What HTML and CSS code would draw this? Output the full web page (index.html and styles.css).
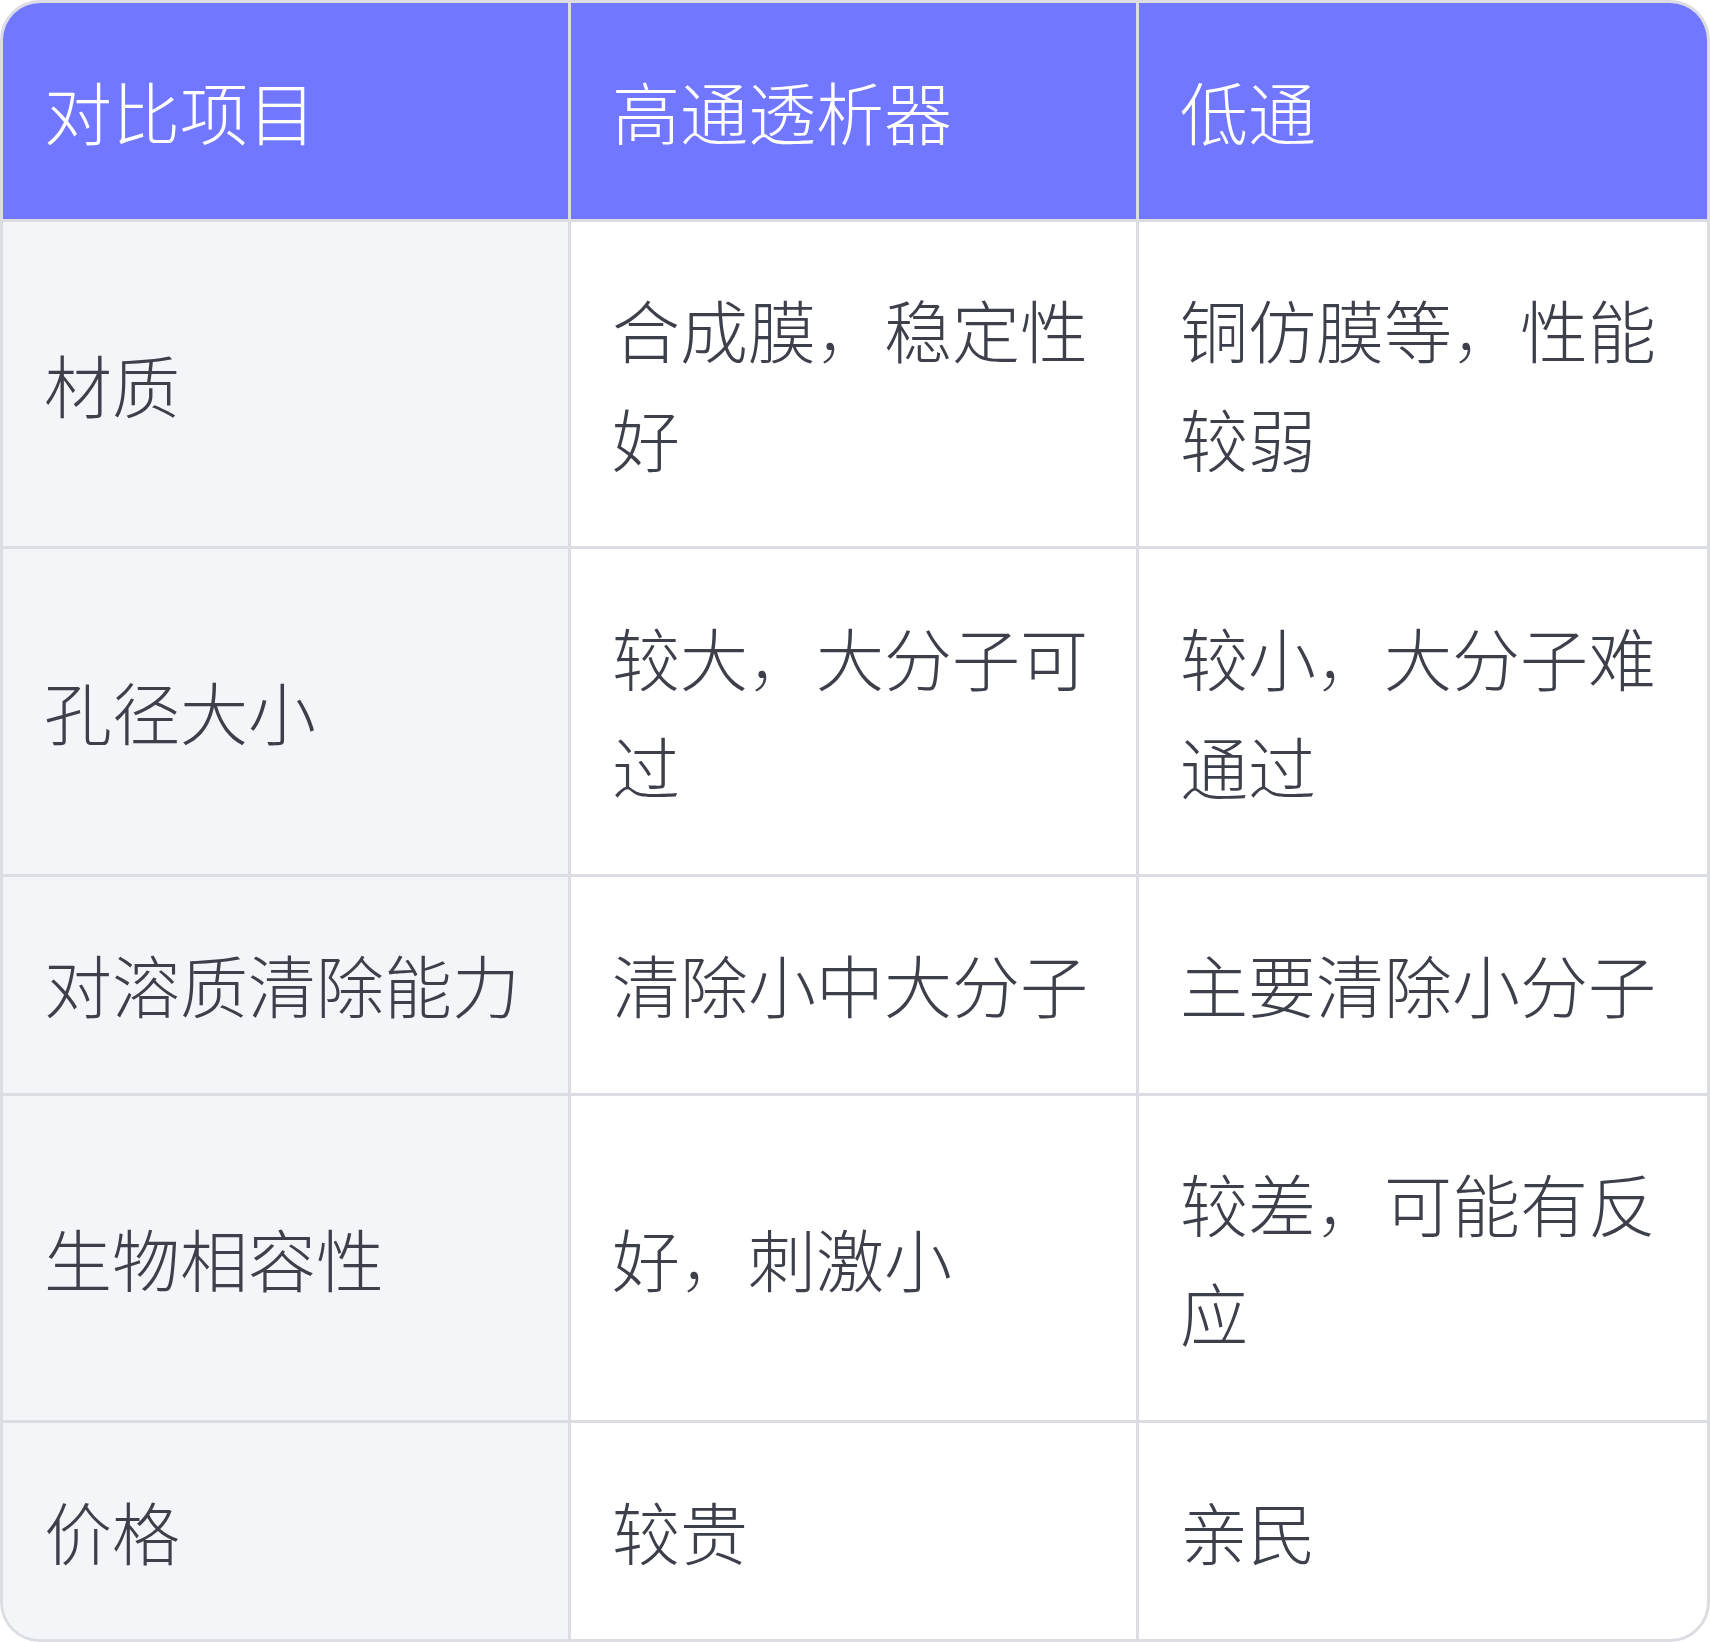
FILE: index.html
```html
<!DOCTYPE html>
<html lang="zh-CN">
<head>
<meta charset="utf-8">
<title>高通透析器 vs 低通</title>
<link rel="stylesheet" href="styles.css">
</head>
<body>
<div class="card">
  <table class="cmp">
    <thead>
      <tr>
        <th>对比项目</th>
        <th>高通透析器</th>
        <th>低通</th>
      </tr>
    </thead>
    <tbody>
      <tr>
        <td>材质</td>
        <td>合成膜<span class="punct">，</span>稳定性好</td>
        <td>铜仿膜等<span class="punct">，</span>性能较弱</td>
      </tr>
      <tr>
        <td>孔径大小</td>
        <td>较大<span class="punct">，</span>大分子可过</td>
        <td>较小<span class="punct">，</span>大分子难通过</td>
      </tr>
      <tr>
        <td>对溶质清除能力</td>
        <td>清除小中大分子</td>
        <td>主要清除小分子</td>
      </tr>
      <tr>
        <td>生物相容性</td>
        <td>好<span class="punct">，</span>刺激小</td>
        <td>较差<span class="punct">，</span>可能有反应</td>
      </tr>
      <tr>
        <td>价格</td>
        <td>较贵</td>
        <td>亲民</td>
      </tr>
    </tbody>
  </table>
</div>
</body>
</html>
```
FILE: styles.css
```css
html, body {
  margin: 0;
  padding: 0;
  background: #ffffff;
}

.card {
  width: 1710px;
  box-sizing: border-box;
  border: 3px solid #dcdde3;
  border-radius: 40px;
  overflow: hidden;
  background: #ffffff;
}

.cmp {
  width: 100%;
  border-collapse: separate;
  border-spacing: 0;
  table-layout: fixed;
  font-family: "Noto Sans CJK SC", "Noto Sans", sans-serif;
  font-size: 68px;
  font-weight: 300;
  line-height: 1.6;
  color: #3d404b;
}

.cmp th,
.cmp td {
  padding: 53.5px 41px;
  text-align: left;
  vertical-align: middle;
  border-right: 3px solid #dcdde3;
  border-bottom: 3px solid #dcdde3;
}

.cmp th:last-child,
.cmp td:last-child {
  border-right: none;
}

.cmp tbody tr:last-child td {
  border-bottom: none;
}

.cmp th {
  background: #7177ff;
  color: #ffffff;
  font-weight: 300;
}

.cmp td:first-child {
  background: #f4f5f9;
}

.punct {
  font-weight: 100;
}
```
